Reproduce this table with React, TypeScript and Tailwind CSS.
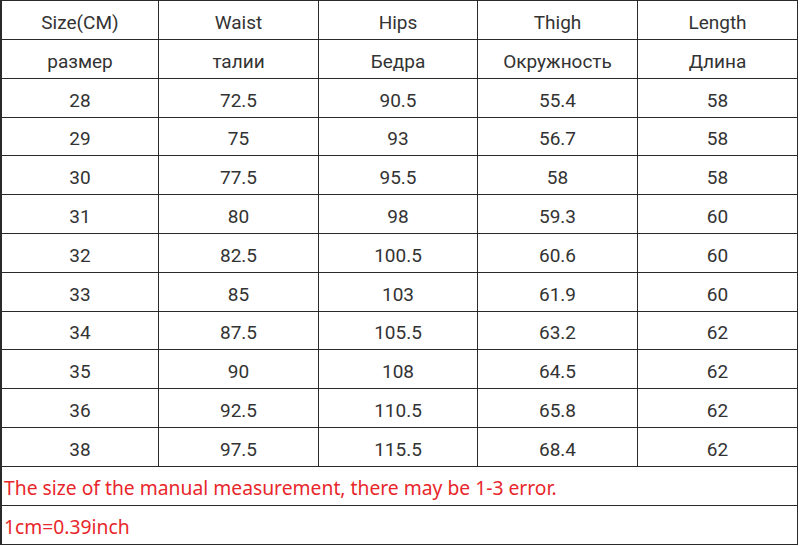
import React from "react";

const header1 = ["Size(CM)", "Waist", "Hips", "Thigh", "Length"];
const header2 = ["размер", "талии", "Бедра", "Окружность", "Длина"];
const data = [
  ["28", "72.5", "90.5", "55.4", "58"],
  ["29", "75", "93", "56.7", "58"],
  ["30", "77.5", "95.5", "58", "58"],
  ["31", "80", "98", "59.3", "60"],
  ["32", "82.5", "100.5", "60.6", "60"],
  ["33", "85", "103", "61.9", "60"],
  ["34", "87.5", "105.5", "63.2", "62"],
  ["35", "90", "108", "64.5", "62"],
  ["36", "92.5", "110.5", "65.8", "62"],
  ["38", "97.5", "115.5", "68.4", "62"],
];

const rows = [header1, header2, ...data];
const heights = ["h-[39px]", "h-[39px]", "h-[39px]", "h-[38px]", "h-[39px]", "h-[39px]", "h-[39px]", "h-[39px]", "h-[38px]", "h-[39px]", "h-[39px]", "h-[39px]"];

export default function App() {
  return (
    <div className="w-[800px] h-[546px] bg-white text-[#333] text-[19px]" style={{ fontFamily: "Roboto, 'Noto Sans', sans-serif" }}>
      <div className="w-[798px] border-l-2 border-t border-[#2a2a2a]">
        {rows.map((r, i) => (
          <div key={i} className={`grid grid-cols-[157px_160px_159px_160px_160px] border-b border-[#2a2a2a] ${heights[i]}`}>
            {r.map((c, j) => (
              <div key={j} className="flex items-center justify-center border-r border-[#2a2a2a] leading-none pt-[4px]">
                {c}
              </div>
            ))}
          </div>
        ))}
        <div className="h-[39px] flex items-center border-b border-r border-[#2a2a2a] pl-[2px] pt-[3px] text-[#e8262b] text-[19.3px] leading-none" style={{ fontFamily: "'Noto Sans', sans-serif" }}>
          The size of the manual measurement, there may be 1-3 error.
        </div>
        <div className="h-[39px] flex items-center border-b border-r border-[#2a2a2a] pl-[2px] pt-[3px] text-[#e8262b] text-[19.3px] leading-none" style={{ fontFamily: "'Noto Sans', sans-serif" }}>
          1cm=0.39inch
        </div>
      </div>
    </div>
  );
}
